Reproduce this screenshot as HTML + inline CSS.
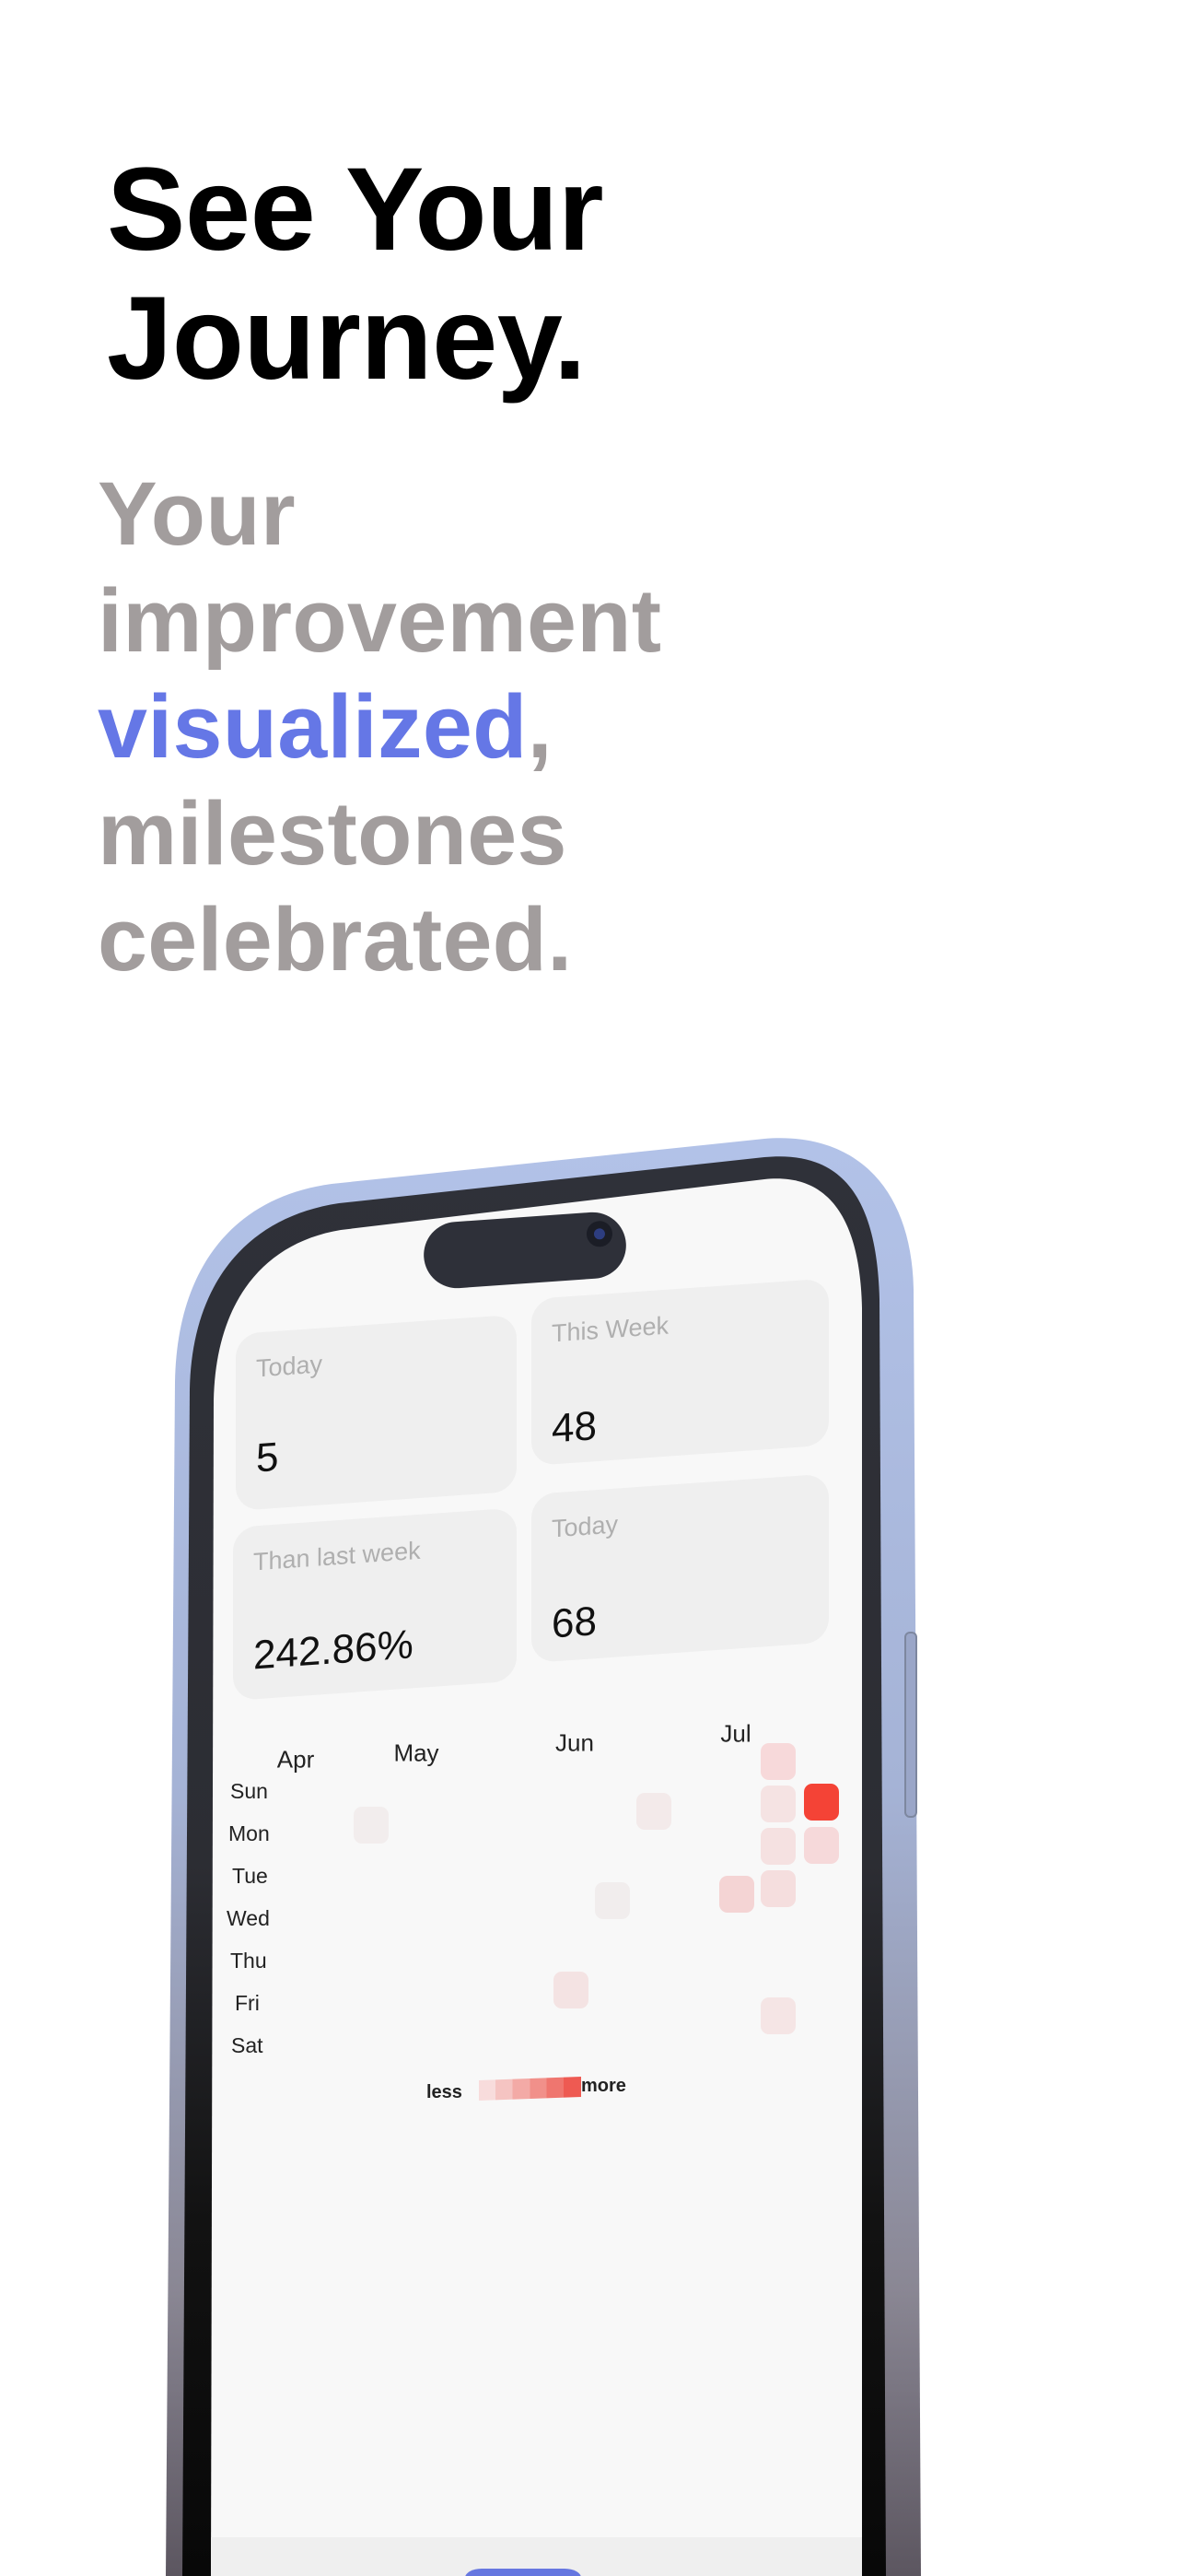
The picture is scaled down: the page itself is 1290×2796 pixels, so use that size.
<!DOCTYPE html>
<html><head><meta charset="utf-8"><style>
html,body{margin:0;padding:0;background:#fff;}
body{width:1290px;height:2796px;position:relative;overflow:hidden;font-family:"Liberation Sans",sans-serif;}
.h{position:absolute;left:116px;top:158px;font-size:128px;line-height:140px;font-weight:bold;color:#000;letter-spacing:-0.5px;}
.s{position:absolute;left:106px;top:500px;font-size:97px;line-height:115.6px;font-weight:bold;color:#a29d9d;letter-spacing:0.3px;}
.s b{color:#6577e6;}
.card{position:absolute;background:#efefef;border-radius:26px;transform-origin:0 0;transform:skewY(-4deg);}
.card .l{position:absolute;left:22px;top:24px;font-size:27px;color:#afafaf;}
.card .v{position:absolute;left:22px;top:112px;font-size:44px;color:#111;}
.t{position:absolute;font-size:23px;color:#222;}
.m{position:absolute;font-size:26px;color:#222;transform:translate(-50%,-50%);}
.c{position:absolute;width:38px;height:40px;border-radius:9px;transform:translate(-50%,-50%);}
</style></head><body>
<div class="h">See Your<br>Journey.</div>
<div class="s">Your<br>improvement<br><b>visualized</b>,<br>milestones<br>celebrated.</div>

<svg width="1290" height="2796" style="position:absolute;left:0;top:0">
<defs>
<linearGradient id="g1" x1="0" y1="0" x2="0" y2="1">
<stop offset="0" stop-color="#b2c2e8"/><stop offset="0.45" stop-color="#a5b3d6"/><stop offset="0.8" stop-color="#8a8794"/><stop offset="1" stop-color="#5c5660"/></linearGradient>
<linearGradient id="g2" x1="0" y1="0" x2="0" y2="1">
<stop offset="0" stop-color="#2f3139"/><stop offset="0.5" stop-color="#2c2d33"/><stop offset="0.75" stop-color="#121212"/><stop offset="1" stop-color="#080808"/></linearGradient>
</defs>
<path d="M180 2796 L190 1500 C192 1380 250 1300 360 1285 L830 1236 C930 1228 990 1290 992 1400 L1000 2796 Z" fill="url(#g1)"/>
<path d="M198 2796 L206 1508 C208 1400 262 1322 368 1306 L830 1256 C915 1248 952 1300 955 1410 L962 2796 Z" fill="url(#g2)"/>
<path d="M229 2796 L232 1520 C234 1420 280 1350 370 1335 L830 1280 C905 1272 934 1330 936 1420 L936 2796 Z" fill="#f8f8f8"/>
<rect x="229" y="2754" width="707" height="42" fill="#efefef"/>
<rect x="505" y="2788" width="126" height="20" rx="18" fill="#6677e0"/>
<rect x="983" y="1772" width="12" height="200" rx="5" fill="#9aa6c8" stroke="#7d879f" stroke-width="2"/>
<g transform="rotate(-4 570 1357)">
<rect x="460" y="1321" width="220" height="72" rx="36" fill="#2e3039"/>
<circle cx="652" cy="1345" r="14" fill="#1b1d26"/><circle cx="652" cy="1345" r="6" fill="#2d3d80"/>
</g>
</svg>

<div class="card" style="left:256px;top:1448px;width:305px;height:192px"><div class="l">Today</div><div class="v">5</div></div>
<div class="card" style="left:577px;top:1410px;width:323px;height:181px"><div class="l">This Week</div><div class="v" style="top:118px">48</div></div>
<div class="card" style="left:253px;top:1658px;width:308px;height:188px"><div class="l">Than last week</div><div class="v" style="top:116px">242.86%</div></div>
<div class="card" style="left:577px;top:1622px;width:323px;height:183px"><div class="l">Today</div><div class="v" style="top:118px">68</div></div>

<div class="m" style="left:321px;top:1910px">Apr</div>
<div class="m" style="left:452px;top:1903px">May</div>
<div class="m" style="left:624px;top:1892px">Jun</div>
<div class="m" style="left:799px;top:1882px">Jul</div>

<div class="t" style="left:250px;top:1931px">Sun</div>
<div class="t" style="left:248px;top:1977px">Mon</div>
<div class="t" style="left:252px;top:2023px">Tue</div>
<div class="t" style="left:246px;top:2069px">Wed</div>
<div class="t" style="left:250px;top:2115px">Thu</div>
<div class="t" style="left:255px;top:2161px">Fri</div>
<div class="t" style="left:251px;top:2207px">Sat</div>

<div class="c" style="left:845px;top:1912px;background:#f7d9da"></div>
<div class="c" style="left:845px;top:1958px;background:#f5e3e3"></div>
<div class="c" style="left:845px;top:2004px;background:#f5e1e1"></div>
<div class="c" style="left:845px;top:2050px;background:#f5dede"></div>
<div class="c" style="left:845px;top:2188px;background:#f5e5e5"></div>
<div class="c" style="left:892px;top:1956px;background:#f44336"></div>
<div class="c" style="left:892px;top:2003px;background:#f6d9da"></div>
<div class="c" style="left:800px;top:2056px;background:#f4d4d4"></div>
<div class="c" style="left:710px;top:1966px;background:#f3eaea"></div>
<div class="c" style="left:665px;top:2063px;background:#f1eded"></div>
<div class="c" style="left:620px;top:2160px;background:#f4e3e3"></div>
<div class="c" style="left:403px;top:1981px;background:#f2eded"></div>

<div style="position:absolute;left:463px;top:2260px;font-size:20px;font-weight:bold;color:#222">less</div>
<div style="position:absolute;left:520px;top:2256px;width:111px;height:22px;transform:skewY(-2deg);background:linear-gradient(90deg,#f8dcdc 0,#f8dcdc 16%,#f5c4c2 16%,#f5c4c2 33%,#f3aaa6 33%,#f3aaa6 50%,#f1908a 50%,#f1908a 66%,#ef766f 66%,#ef766f 83%,#ee5a52 83%)"></div>
<div style="position:absolute;left:631px;top:2253px;font-size:20px;font-weight:bold;color:#222">more</div>
</body></html>
